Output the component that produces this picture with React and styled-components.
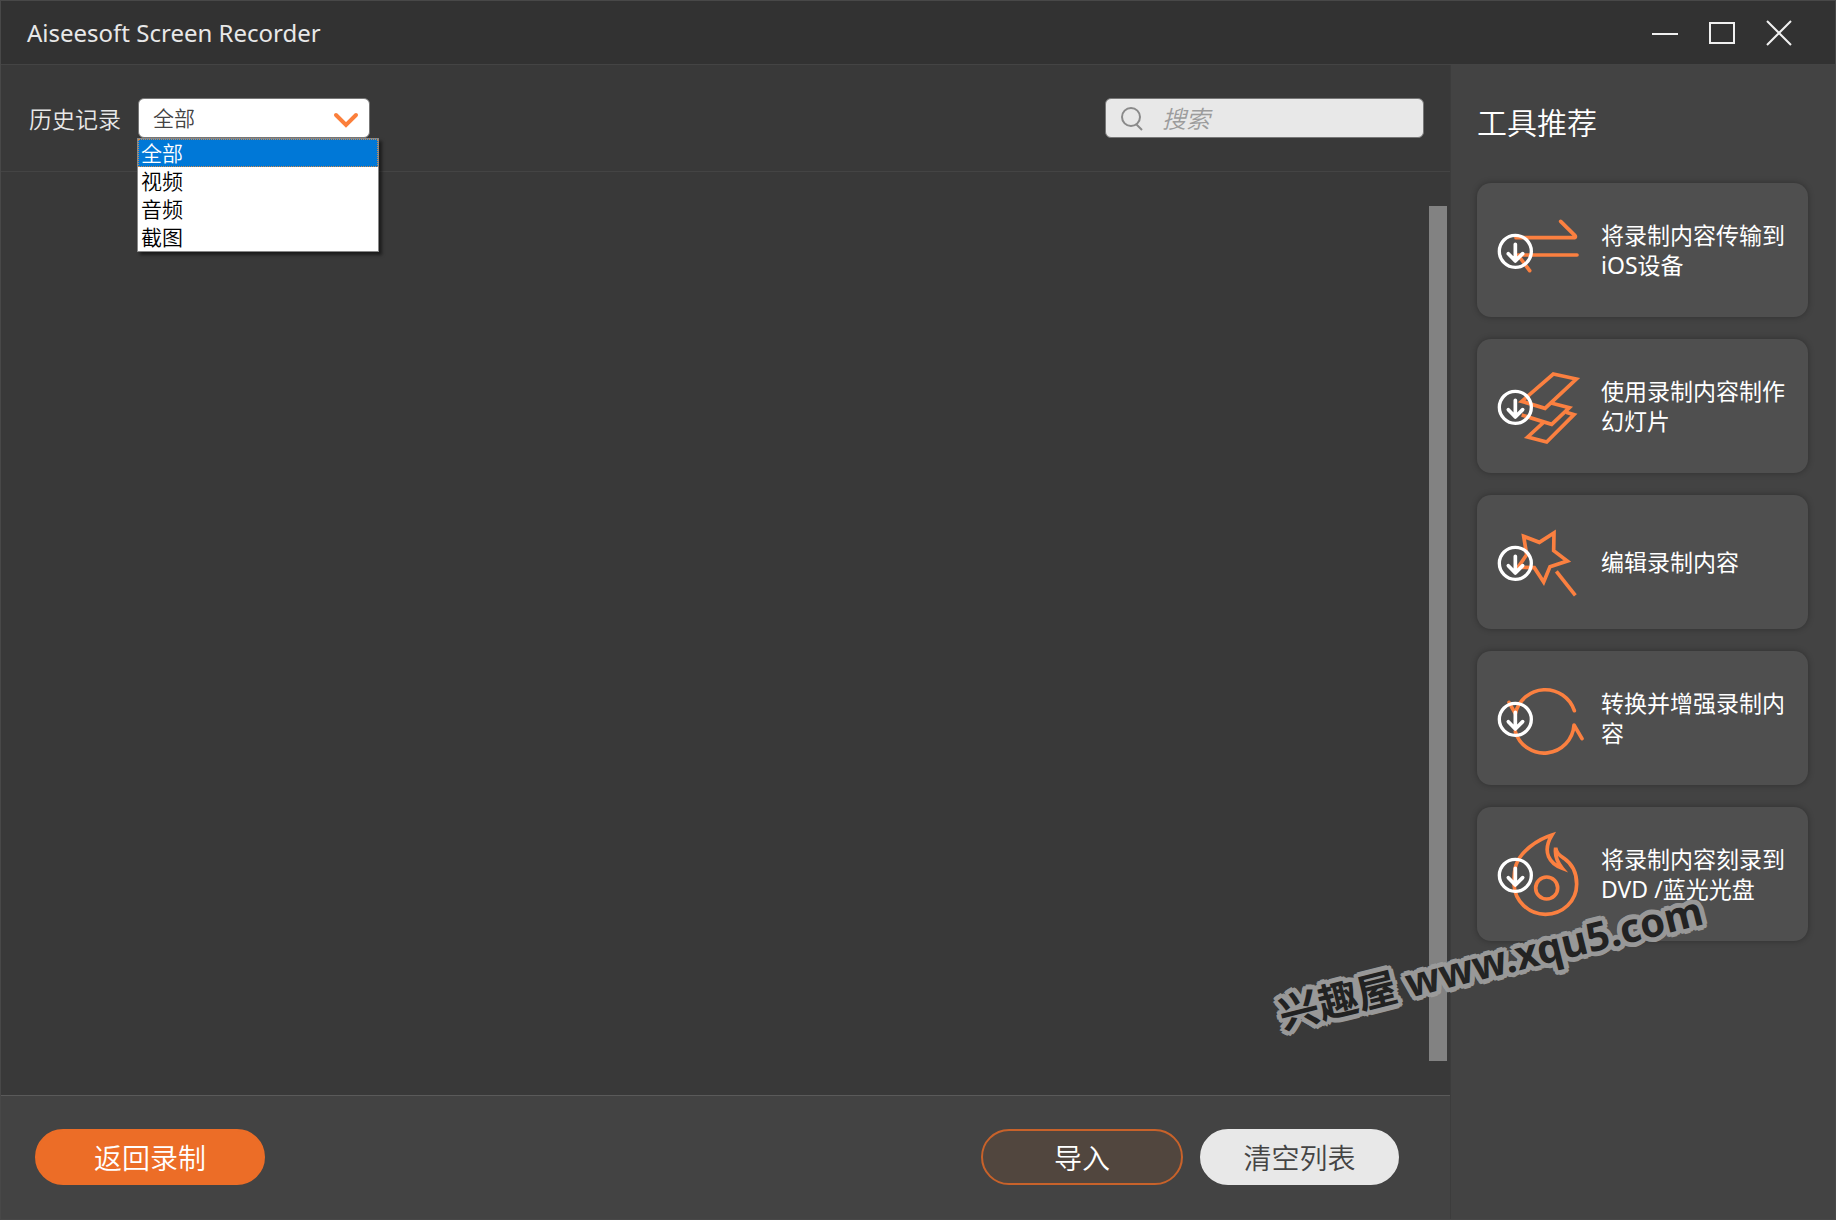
import { useState } from 'react';
import styled, { createGlobalStyle } from 'styled-components';

const filters = ['全部', '视频', '音频', '截图'];

const tools = [
  { id: 'transfer', text: '将录制内容传输到iOS设备', icon: <TransferShape /> },
  { id: 'slides', text: '使用录制内容制作幻灯片', icon: <SlidesShape /> },
  { id: 'edit', text: '编辑录制内容', icon: <WandShape /> },
  { id: 'convert', text: '转换并增强录制内容', icon: <ConvertShape /> },
  { id: 'burn', text: '将录制内容刻录到DVD /蓝光光盘', icon: <BurnShape /> },
];

function TransferShape() {
  return (
    <g strokeLinecap="round" strokeLinejoin="round">
      <path d="M78 98H254Q258 96 255 92L212 49" />
      <path d="M261 150H84L119 197" />
    </g>
  );
}

function SlidesShape() {
  return (
    <g>
      <path d="M190 39L259 54L165 142L95 121Z" />
      <path d="M183 126L238 140L185 190L95 162" />
      <path d="M163 182L113 228L170 243L252 161L228 154" />
    </g>
  );
}

function WandShape() {
  return (
    <g>
      <path d="M101 58L148 76L192 48L191 101L232 132L180 149L161 195L133 152L84 151L110 113Z" />
      <path d="M199 163L256 235" />
    </g>
  );
}

function ConvertShape() {
  return (
    <g strokeLinecap="round" strokeLinejoin="round">
      <path d="M57 88L76 122A92 92 0 0 1 253 113" />
      <path d="M76 176A90 90 0 0 0 252 156L276 197" />
    </g>
  );
}

function BurnShape() {
  return (
    <g>
      <path d="M186 18C140 32 92 68 78 108C71 128 72 150 72 166C74 216 116 256 166 256C219 256 260 216 260 165C260 128 245 104 222 88C208 79 199 72 197 56C193 82 203 101 217 118C180 104 154 70 186 18Z" />
      <circle cx="170" cy="177" r="33" />
    </g>
  );
}

function ToolCard({ text, icon }) {
  return (
    <Card type="button">
      <CardIcon viewBox="0 0 300 270" aria-hidden="true">
        {icon}
        <g stroke="#fff" strokeLinecap="round" strokeLinejoin="round">
          <circle cx="76" cy="139" r="48" strokeWidth="10" />
          <path d="M76 118V166M55 146L76 168L98 146" strokeWidth="11" />
        </g>
      </CardIcon>
      <CardText>{text}</CardText>
    </Card>
  );
}

function FilterSelect() {
  const [value, setValue] = useState(filters[0]);
  const [open, setOpen] = useState(true);

  const pick = (item) => {
    setValue(item);
    setOpen(false);
  };

  return (
    <SelectBox>
      <select
        id="history-filter"
        value={value}
        onChange={(e) => setValue(e.target.value)}
        onClick={() => setOpen(!open)}
      >
        {filters.map((item) => (
          <option key={item}>{item}</option>
        ))}
      </select>
      <svg width="26" height="16" viewBox="0 0 26 16" aria-hidden="true">
        <path d="M3 3L13 13L23 3" fill="none" stroke="#fb7f3b" strokeWidth="4" strokeLinecap="round" />
      </svg>
      {open && (
        <Menu role="listbox" aria-label="历史记录">
          {filters.map((item) => (
            <MenuItem
              key={item}
              role="option"
              aria-selected={item === value}
              $active={item === value}
              onClick={() => pick(item)}
            >
              {item}
            </MenuItem>
          ))}
        </Menu>
      )}
    </SelectBox>
  );
}

function App() {
  return (
    <>
      <GlobalStyle />
      <Window>
        <TitleBar>
          <h1>Aiseesoft Screen Recorder</h1>
          <WindowControls>
            <button type="button" aria-label="最小化">
              <svg width="28" height="28" viewBox="0 0 28 28">
                <path d="M1 15H27" />
              </svg>
            </button>
            <button type="button" aria-label="最大化">
              <svg width="28" height="28" viewBox="0 0 28 28">
                <path d="M2 4H26V24H2Z" />
              </svg>
            </button>
            <button type="button" aria-label="关闭">
              <svg width="28" height="28" viewBox="0 0 28 28">
                <path d="M2 2L26 26M26 2L2 26" />
              </svg>
            </button>
          </WindowControls>
        </TitleBar>

        <Content>
          <Main>
            <FilterBar>
              <label htmlFor="history-filter">历史记录</label>
              <FilterSelect />
              <SearchBox>
                <svg width="24" height="26" viewBox="0 0 24 26" aria-hidden="true">
                  <circle cx="11" cy="12" r="9" />
                  <path d="M16 19L22 25" />
                </svg>
                <input type="search" placeholder="搜索" aria-label="搜索" />
              </SearchBox>
            </FilterBar>

            <HistoryList>
              <ScrollThumb />
            </HistoryList>

            <Footer>
              <PillButton type="button" $variant="primary">
                返回录制
              </PillButton>
              <FooterGroup>
                <PillButton type="button" $variant="outline">
                  导入
                </PillButton>
                <PillButton type="button" $variant="light">
                  清空列表
                </PillButton>
              </FooterGroup>
            </Footer>
          </Main>

          <Sidebar>
            <h2>工具推荐</h2>
            <CardList>
              {tools.map((tool) => (
                <ToolCard key={tool.id} text={tool.text} icon={tool.icon} />
              ))}
            </CardList>
          </Sidebar>
        </Content>

        <Watermark>兴趣屋 www.xqu5.com</Watermark>
      </Window>
    </>
  );
}

const GlobalStyle = createGlobalStyle`
  *,
  *::before,
  *::after {
    box-sizing: border-box;
  }

  body {
    margin: 0;
    background: #393939;
    color: #fff;
    font-family: 'Noto Sans', 'Noto Sans CJK SC', sans-serif;
    font-weight: 350;
  }

  h1,
  h2,
  ul {
    margin: 0;
    padding: 0;
    font-weight: inherit;
  }

  button,
  input,
  select {
    font-family: inherit;
    font-weight: inherit;
  }
`;

const Window = styled.div`
  position: relative;
  min-height: 100vh;
  display: flex;
  flex-direction: column;
  border: 1px solid #484848;
  overflow: hidden;
`;

const TitleBar = styled.header`
  height: 64px;
  padding: 0 42px 0 26px;
  display: flex;
  align-items: center;
  justify-content: space-between;
  background: #323232;
  border-bottom: 1px solid #444;

  h1 {
    font-size: 24px;
    font-weight: 400;
    line-height: 32px;
    color: #e8e8e8;
  }
`;

const WindowControls = styled.div`
  display: flex;
  gap: 29px;

  button {
    padding: 0;
    border: 0;
    background: transparent;
    cursor: pointer;
  }

  svg {
    display: block;
    fill: none;
    stroke: #f0f0f0;
    stroke-width: 2;
  }
`;

const Content = styled.div`
  flex: 1;
  display: flex;
`;

const Main = styled.main`
  flex: 1;
  display: flex;
  flex-direction: column;
  background: #393939;
`;

const FilterBar = styled.div`
  height: 107px;
  padding: 0 26px 0 28px;
  display: flex;
  align-items: center;
  border-bottom: 1px solid #444;

  label {
    margin-right: 17px;
    font-size: 23px;
    color: #e8e8e8;
  }
`;

const SelectBox = styled.div`
  position: relative;
  width: 232px;

  select {
    display: block;
    width: 100%;
    height: 40px;
    padding: 0 14px;
    appearance: none;
    border: 1px solid #777;
    border-radius: 6px;
    outline: none;
    background: #fff;
    color: #444;
    font-size: 21px;
  }

  svg {
    position: absolute;
    top: 14px;
    right: 11px;
    pointer-events: none;
  }
`;

const Menu = styled.ul`
  position: absolute;
  top: 100%;
  left: -1px;
  z-index: 2;
  width: 242px;
  border: 1px solid #888;
  background: #fff;
  color: #000;
  list-style: none;
  box-shadow: 3px 3px 3px rgba(0, 0, 0, 0.5);
`;

const MenuItem = styled.li`
  height: 28px;
  padding: 0 3px;
  font-size: 21px;
  line-height: 28px;
  background: ${({ $active }) => ($active ? '#0078d7' : '#fff')};
  color: ${({ $active }) => ($active ? '#fff' : '#000')};
  outline: ${({ $active }) => ($active ? '1px dotted #d08a4a' : 'none')};
  outline-offset: -1px;
  cursor: default;
`;

const SearchBox = styled.div`
  width: 319px;
  height: 40px;
  margin-left: auto;
  padding: 0 14px;
  display: flex;
  align-items: center;
  gap: 18px;
  border: 1px solid #777;
  border-radius: 6px;
  background: #e8e8e8;

  svg {
    flex: none;
    fill: none;
    stroke: #8a8a8a;
    stroke-width: 2;
  }

  input {
    flex: 1;
    min-width: 0;
    padding: 0;
    border: 0;
    outline: none;
    background: transparent;
    color: #444;
    font-size: 24px;
  }

  input::placeholder {
    color: #9c9c9c;
    font-style: italic;
  }
`;

const HistoryList = styled.section`
  flex: 1;
  display: flex;
  justify-content: flex-end;
  padding: 34px 3px;
`;

const ScrollThumb = styled.div`
  width: 18px;
  background: #828282;
`;

const Footer = styled.footer`
  height: 124px;
  padding: 0 51px 2px 34px;
  display: flex;
  align-items: center;
  justify-content: space-between;
  background: #434343;
  border-top: 1px solid #5a5a5a;
`;

const FooterGroup = styled.div`
  display: flex;
  gap: 17px;
`;

const pillVariants = {
  primary: { width: 230, background: '#ec6d27', border: '#ec6d27', color: '#fff' },
  outline: { width: 202, background: '#51463e', border: '#c8622a', color: '#fff' },
  light: { width: 199, background: '#e8e8e8', border: '#e8e8e8', color: '#444' },
};

const PillButton = styled.button`
  width: ${({ $variant }) => pillVariants[$variant].width}px;
  height: 56px;
  padding: 0;
  border: 2px solid ${({ $variant }) => pillVariants[$variant].border};
  border-radius: 28px;
  background: ${({ $variant }) => pillVariants[$variant].background};
  color: ${({ $variant }) => pillVariants[$variant].color};
  font-size: 28px;
  cursor: pointer;
`;

const Sidebar = styled.aside`
  width: 385px;
  padding: 36px 27px 0 26px;
  background: #434343;
  border-left: 1px solid #3c3c3c;

  h2 {
    font-size: 30px;
    line-height: 44px;
  }
`;

const CardList = styled.div`
  margin-top: 38px;
  display: flex;
  flex-direction: column;
  gap: 22px;
`;

const Card = styled.button`
  min-height: 134px;
  padding: 0 18px 0 13px;
  display: flex;
  align-items: center;
  gap: 11px;
  border: 0;
  border-radius: 14px;
  background: #4f4f4f;
  color: #fff;
  text-align: left;
  box-shadow: 0 0 6px rgba(0, 0, 0, 0.3);
  cursor: pointer;
`;

const CardIcon = styled.svg`
  flex: none;
  width: 100px;
  height: 90px;
  fill: none;
  stroke: #fb8040;
  stroke-width: 11;
`;

const CardText = styled.span`
  font-size: 23px;
  font-weight: 400;
  line-height: 30px;
`;

const Watermark = styled.div`
  position: absolute;
  right: 127px;
  bottom: 227px;
  z-index: 3;
  font-size: 40px;
  font-weight: 700;
  line-height: 60px;
  color: #222;
  text-shadow:
    5px 0 #9c9c9c,
    -5px 0 #9c9c9c,
    0 5px #9c9c9c,
    0 -5px #9c9c9c,
    4px 3px #9c9c9c,
    -4px 3px #9c9c9c,
    4px -3px #9c9c9c,
    -4px -3px #9c9c9c,
    3px 4px #9c9c9c,
    -3px 4px #9c9c9c,
    3px -4px #9c9c9c,
    -3px -4px #9c9c9c,
    2px 2px #9c9c9c,
    -2px 2px #9c9c9c,
    2px -2px #9c9c9c,
    -2px -2px #9c9c9c;
  transform: rotate(-14deg);
  opacity: 0.96;
  pointer-events: none;
`;

export default App;
